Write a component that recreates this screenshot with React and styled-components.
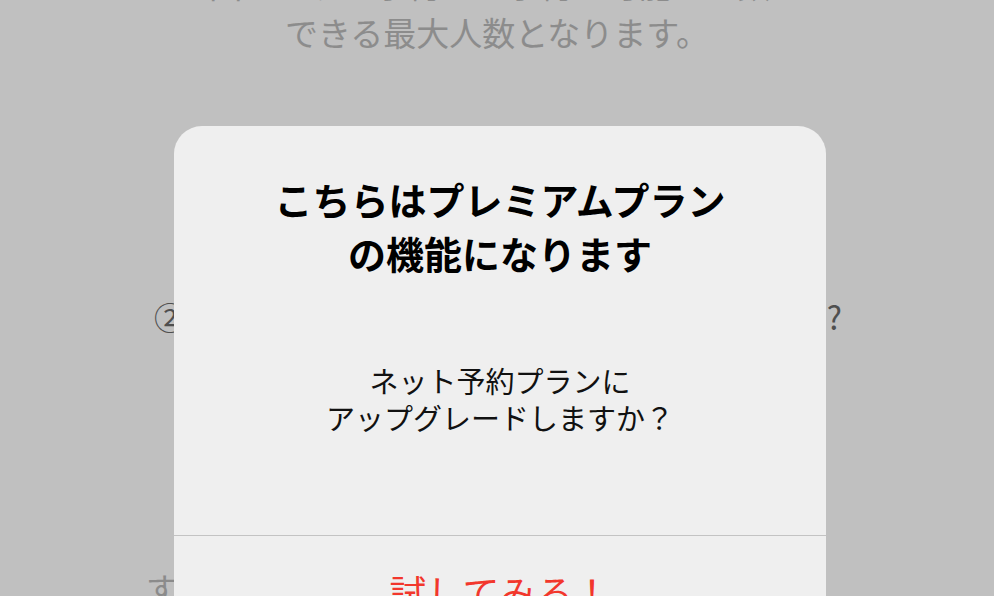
import React from "react";
import styled, { createGlobalStyle } from "styled-components";

const GlobalStyle = createGlobalStyle`
  html,
  body {
    margin: 0;
    padding: 0;
    width: 994px;
    height: 596px;
    overflow: hidden;
    background: #ffffff;
    font-family: "Noto Sans CJK JP", "Noto Sans", sans-serif;
  }
`;

// 背景のページ
const Page = styled.div`
  display: flex;
  flex-direction: column;
  margin-top: -40px;
`;

const Note = styled.p`
  margin: 0;
  font-size: 33px;
  line-height: 48px;
  color: #bbbbbb;
  text-align: center;
`;

const Question = styled.p`
  margin: 238px 0 0;
  padding: 0 152px 0 154px;
  display: flex;
  justify-content: space-between;
  font-size: 32px;
  line-height: 44px;
  color: #6a6a6a;
`;

const Body = styled.p`
  margin: 227px 0 0;
  padding-left: 146px;
  font-size: 32px;
  line-height: 44px;
  color: #b9b9b9;
`;

// ダイアログ
const Overlay = styled.div`
  position: fixed;
  inset: 0;
  background: rgba(0, 0, 0, 0.247);
  display: flex;
  justify-content: center;
  align-items: flex-start;
  padding: 126px 0 0 6px;
`;

const Dialog = styled.div`
  width: 652px;
  background: #efefef;
  border-radius: 28px;
  display: flex;
  flex-direction: column;
  align-items: center;
  text-align: center;
`;

const Title = styled.h2`
  margin: 0;
  padding-top: 46px;
  font-size: 38px;
  line-height: 54px;
  font-weight: 700;
  color: #000000;
`;

const Message = styled.p`
  margin: 0;
  padding: 82px 0 99px 0;
  font-size: 29px;
  line-height: 37px;
  color: #111111;
`;

const Action = styled.button`
  align-self: stretch;
  border: none;
  border-top: 1px solid #c3c3c3;
  background: transparent;
  padding: 32px 0 40px;
  font-family: inherit;
  font-size: 37px;
  line-height: 48px;
  color: #f2372c;
`;

function App() {
  return (
    <>
      <GlobalStyle />
      <Page>
        <Note>
          1回のネット予約でご予約が可能な人数は
          <br />
          できる最大人数となります。
        </Note>
        <Question>
          <span>②</span>
          <span>?</span>
        </Question>
        <Body>すべてのプランでご利用いただけます</Body>
      </Page>
      {/* dialog */}
      <Overlay>
        <Dialog>
          <Title>
            こちらはプレミアムプラン
            <br />
            の機能になります
          </Title>
          <Message>
            ネット予約プランに
            <br />
            アップグレードしますか？
          </Message>
          <Action>試してみる！</Action>
        </Dialog>
      </Overlay>
    </>
  );
}

export default App;
